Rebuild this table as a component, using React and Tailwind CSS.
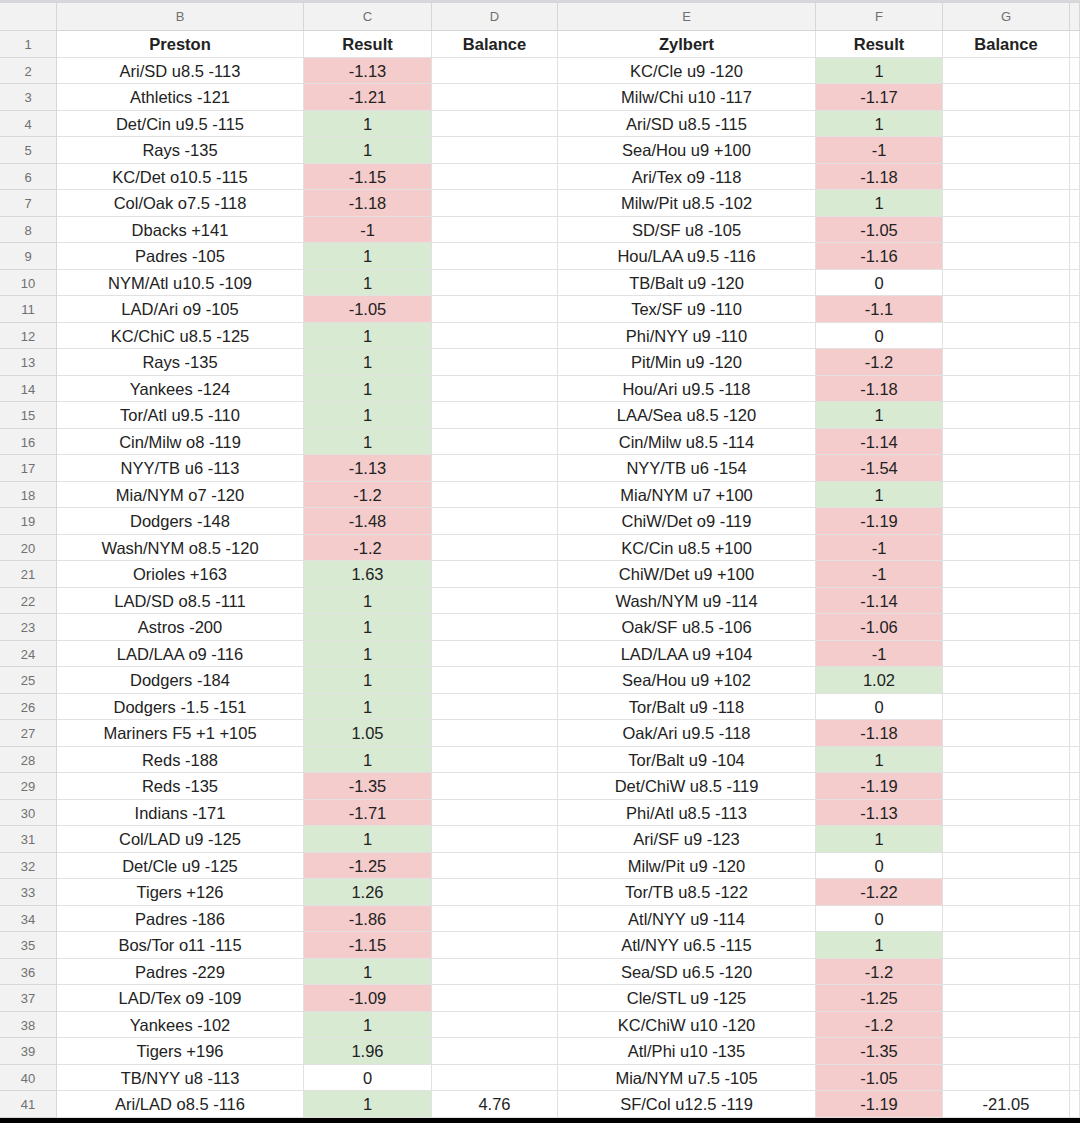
import React from "react";

const preston = [
  ["Ari/SD u8.5 -113", "-1.13"],
  ["Athletics -121", "-1.21"],
  ["Det/Cin u9.5 -115", "1"],
  ["Rays -135", "1"],
  ["KC/Det o10.5 -115", "-1.15"],
  ["Col/Oak o7.5 -118", "-1.18"],
  ["Dbacks +141", "-1"],
  ["Padres -105", "1"],
  ["NYM/Atl u10.5 -109", "1"],
  ["LAD/Ari o9 -105", "-1.05"],
  ["KC/ChiC u8.5 -125", "1"],
  ["Rays -135", "1"],
  ["Yankees -124", "1"],
  ["Tor/Atl u9.5 -110", "1"],
  ["Cin/Milw o8 -119", "1"],
  ["NYY/TB u6 -113", "-1.13"],
  ["Mia/NYM o7 -120", "-1.2"],
  ["Dodgers -148", "-1.48"],
  ["Wash/NYM o8.5 -120", "-1.2"],
  ["Orioles +163", "1.63"],
  ["LAD/SD o8.5 -111", "1"],
  ["Astros -200", "1"],
  ["LAD/LAA o9 -116", "1"],
  ["Dodgers -184", "1"],
  ["Dodgers -1.5 -151", "1"],
  ["Mariners F5 +1 +105", "1.05"],
  ["Reds -188", "1"],
  ["Reds -135", "-1.35"],
  ["Indians -171", "-1.71"],
  ["Col/LAD u9 -125", "1"],
  ["Det/Cle u9 -125", "-1.25"],
  ["Tigers +126", "1.26"],
  ["Padres -186", "-1.86"],
  ["Bos/Tor o11 -115", "-1.15"],
  ["Padres -229", "1"],
  ["LAD/Tex o9 -109", "-1.09"],
  ["Yankees -102", "1"],
  ["Tigers +196", "1.96"],
  ["TB/NYY u8 -113", "0"],
  ["Ari/LAD o8.5 -116", "1"],
];

const zylbert = [
  ["KC/Cle u9 -120", "1"],
  ["Milw/Chi u10 -117", "-1.17"],
  ["Ari/SD u8.5 -115", "1"],
  ["Sea/Hou u9 +100", "-1"],
  ["Ari/Tex o9 -118", "-1.18"],
  ["Milw/Pit u8.5 -102", "1"],
  ["SD/SF u8 -105", "-1.05"],
  ["Hou/LAA u9.5 -116", "-1.16"],
  ["TB/Balt u9 -120", "0"],
  ["Tex/SF u9 -110", "-1.1"],
  ["Phi/NYY u9 -110", "0"],
  ["Pit/Min u9 -120", "-1.2"],
  ["Hou/Ari u9.5 -118", "-1.18"],
  ["LAA/Sea u8.5 -120", "1"],
  ["Cin/Milw u8.5 -114", "-1.14"],
  ["NYY/TB u6 -154", "-1.54"],
  ["Mia/NYM u7 +100", "1"],
  ["ChiW/Det o9 -119", "-1.19"],
  ["KC/Cin u8.5 +100", "-1"],
  ["ChiW/Det u9 +100", "-1"],
  ["Wash/NYM u9 -114", "-1.14"],
  ["Oak/SF u8.5 -106", "-1.06"],
  ["LAD/LAA u9 +104", "-1"],
  ["Sea/Hou u9 +102", "1.02"],
  ["Tor/Balt u9 -118", "0"],
  ["Oak/Ari u9.5 -118", "-1.18"],
  ["Tor/Balt u9 -104", "1"],
  ["Det/ChiW u8.5 -119", "-1.19"],
  ["Phi/Atl u8.5 -113", "-1.13"],
  ["Ari/SF u9 -123", "1"],
  ["Milw/Pit u9 -120", "0"],
  ["Tor/TB u8.5 -122", "-1.22"],
  ["Atl/NYY u9 -114", "0"],
  ["Atl/NYY u6.5 -115", "1"],
  ["Sea/SD u6.5 -120", "-1.2"],
  ["Cle/STL u9 -125", "-1.25"],
  ["KC/ChiW u10 -120", "-1.2"],
  ["Atl/Phi u10 -135", "-1.35"],
  ["Mia/NYM u7.5 -105", "-1.05"],
  ["SF/Col u12.5 -119", "-1.19"],
];

function fill(v) {
  const n = parseFloat(v);
  if (n > 0) return "bg-[#d9ead3]";
  if (n < 0) return "bg-[#f4cccc]";
  return "bg-white";
}

const cell = "flex items-center justify-center pt-[2px] border-r border-b border-[#e1e1e1] text-[16.5px] text-[#222] whitespace-nowrap overflow-hidden";
const hdr = "flex items-center justify-center border-r border-b border-[#d6d6d6] bg-[#f2f2f2] text-[13px] text-[#707070]";
const cols = "grid grid-cols-[57px_247px_128px_126px_258px_127px_127px_1fr]";

export default function App() {
  return (
    <div
      className="w-[1080px] h-[1123px] overflow-hidden bg-black"
      style={{ fontFamily: '"Liberation Sans", Arial, sans-serif' }}
    >
      <div className="h-[3px] bg-[#d5d7da]" />
      <div className={`${cols} h-[28px]`}>
        <div className={hdr} />
        {["B", "C", "D", "E", "F", "G", ""].map((l, i) => (
          <div key={i} className={`${hdr} pt-[1px]`}>{l}</div>
        ))}
      </div>
      <div className={`${cols} auto-rows-[26.5px] bg-white`}>
        <div className={`${hdr} pt-[2px] text-[12px]`}>1</div>
        <div className={`${cell} font-bold`}>Preston</div>
        <div className={`${cell} font-bold`}>Result</div>
        <div className={`${cell} font-bold`}>Balance</div>
        <div className={`${cell} font-bold`}>Zylbert</div>
        <div className={`${cell} font-bold`}>Result</div>
        <div className={`${cell} font-bold`}>Balance</div>
        <div className={cell} />
        {preston.map((p, i) => {
          const z = zylbert[i];
          const last = i === preston.length - 1;
          return (
            <React.Fragment key={i}>
              <div className={`${hdr} pt-[2px] text-[12px]`}>{i + 2}</div>
              <div className={cell}>{p[0]}</div>
              <div className={`${cell} ${fill(p[1])}`}>{p[1]}</div>
              <div className={cell}>{last ? "4.76" : ""}</div>
              <div className={cell}>{z[0]}</div>
              <div className={`${cell} ${fill(z[1])}`}>{z[1]}</div>
              <div className={cell}>{last ? "-21.05" : ""}</div>
              <div className={cell} />
            </React.Fragment>
          );
        })}
      </div>
    </div>
  );
}
